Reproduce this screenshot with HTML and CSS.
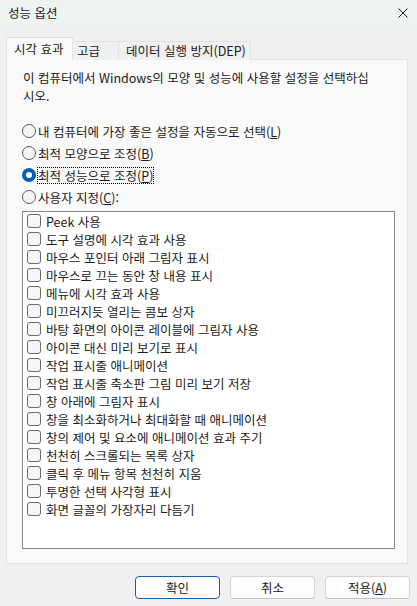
FILE: index.html
```html
<!DOCTYPE html>
<html lang="ko">
<head>
<meta charset="utf-8">
<title>성능 옵션</title>
<link rel="stylesheet" href="styles.css">
</head>
<body>
<div class="titlebar">
  <span class="title">성능 옵션</span>
  <svg class="close" width="10" height="10" viewBox="0 0 10 10"><path d="M0.5 0.5 L9.5 9.5 M9.5 0.5 L0.5 9.5" stroke="#1a1a1a" stroke-width="1" fill="none"/></svg>
</div>
<div class="content">
  <div class="tabs">
    <div class="tab tab-active tab-1">시각 효과</div>
    <div class="tab tab-2">고급</div>
    <div class="tab tab-3">데이터 실행 방지(DEP)</div>
  </div>
  <div class="panel">
    <p class="desc">이 컴퓨터에서 Windows의 모양 및 성능에 사용할 설정을 선택하십<br>시오.</p>
    <div class="radios">
      <div class="radio-row"><span class="radio"></span><span class="rlabel">내 컴퓨터에 가장 좋은 설정을 자동으로 선택(<u>L</u>)</span></div>
      <div class="radio-row"><span class="radio"></span><span class="rlabel">최적 모양으로 조정(<u>B</u>)</span></div>
      <div class="radio-row"><span class="radio radio-on"></span><span class="rlabel focus">최적 성능으로 조정(<u>P</u>)</span></div>
      <div class="radio-row"><span class="radio"></span><span class="rlabel">사용자 지정(<u>C</u>):</span></div>
    </div>
    <div class="listbox">
      <div class="item"><span class="check"></span>Peek 사용</div>
      <div class="item"><span class="check"></span>도구 설명에 시각 효과 사용</div>
      <div class="item"><span class="check"></span>마우스 포인터 아래 그림자 표시</div>
      <div class="item"><span class="check"></span>마우스로 끄는 동안 창 내용 표시</div>
      <div class="item"><span class="check"></span>메뉴에 시각 효과 사용</div>
      <div class="item"><span class="check"></span>미끄러지듯 열리는 콤보 상자</div>
      <div class="item"><span class="check"></span>바탕 화면의 아이콘 레이블에 그림자 사용</div>
      <div class="item"><span class="check"></span>아이콘 대신 미리 보기로 표시</div>
      <div class="item"><span class="check"></span>작업 표시줄 애니메이션</div>
      <div class="item"><span class="check"></span>작업 표시줄 축소판 그림 미리 보기 저장</div>
      <div class="item"><span class="check"></span>창 아래에 그림자 표시</div>
      <div class="item"><span class="check"></span>창을 최소화하거나 최대화할 때 애니메이션</div>
      <div class="item"><span class="check"></span>창의 제어 및 요소에 애니메이션 효과 주기</div>
      <div class="item"><span class="check"></span>천천히 스크롤되는 목록 상자</div>
      <div class="item"><span class="check"></span>클릭 후 메뉴 항목 천천히 지움</div>
      <div class="item"><span class="check"></span>투명한 선택 사각형 표시</div>
      <div class="item"><span class="check"></span>화면 글꼴의 가장자리 다듬기</div>
    </div>
  </div>
</div>
<div class="buttons">
  <button class="btn btn-default">확인</button>
  <button class="btn">취소</button>
  <button class="btn">적용(<u>A</u>)</button>
</div>
</body>
</html>
```
FILE: styles.css
```css
html, body {
  margin: 0;
  padding: 0;
}
body {
  width: 417px;
  height: 606px;
  overflow: hidden;
  background: #f0f0f0;
  font-family: "Noto Sans CJK KR", "Noto Sans", sans-serif;
  font-size: 12.5px;
  color: #1b1b1b;
}
u {
  text-decoration: underline;
  text-underline-offset: 1px;
}
.titlebar {
  height: 28px;
  box-sizing: border-box;
  display: flex;
  align-items: center;
  justify-content: space-between;
  padding: 0 9px 2px 8px;
  background: #eef3f0;
}
.title {
  font-size: 12.5px;
  line-height: 16px;
}
.close {
  display: block;
}
.content {
  padding: 9px 9px 0 6px;
}
.tabs {
  display: flex;
  align-items: flex-end;
  height: 23px;
  margin-bottom: -1px;
  position: relative;
  z-index: 1;
}
.tab {
  box-sizing: border-box;
  height: 19px;
  border: 1px solid #e2e2e2;
  border-bottom: none;
  background: #f0f0f0;
  line-height: 18px;
  white-space: nowrap;
}
.tab-active {
  height: 23px;
  background: #f9f9f9;
  line-height: 21px;
}
.tab-1 { width: 67px; padding-left: 7px; }
.tab-2 { width: 46px; padding-left: 4px; border-left: none; }
.tab-3 { width: 132px; padding-left: 7px; border-left: none; }
.panel {
  box-sizing: border-box;
  width: 402px;
  height: 505px;
  border: 1px solid #e2e2e2;
  background: #f9f9f9;
  padding: 9px 0 0 15px;
}
.desc {
  margin: 0 0 0 1px;
  line-height: 18px;
  white-space: nowrap;
}
.radios {
  margin-top: 15px;
}
.radio-row {
  height: 22px;
  display: flex;
  align-items: center;
}
.radio {
  box-sizing: border-box;
  width: 14px;
  height: 14px;
  border: 1px solid #5c5c5c;
  border-radius: 50%;
  background: #f5f5f5;
  margin-right: 2px;
  flex: none;
  display: flex;
  align-items: center;
  justify-content: center;
}
.radio-on {
  border: none;
  background: #005fb8;
}
.radio-on::after {
  content: "";
  width: 6px;
  height: 6px;
  border-radius: 50%;
  background: #ffffff;
}
.rlabel {
  line-height: 15px;
  white-space: nowrap;
}
.focus {
  outline: 1px dotted #000000;
}
.listbox {
  box-sizing: border-box;
  width: 373px;
  height: 338px;
  margin-top: 3px;
  border: 1px solid #848991;
  background: #ffffff;
}
.item {
  height: 18px;
  display: flex;
  align-items: center;
  padding-left: 4px;
  white-space: nowrap;
}
.check {
  box-sizing: border-box;
  width: 14px;
  height: 14px;
  border: 1px solid #6a6a6a;
  border-radius: 3px;
  background: #f7f7f7;
  margin-right: 5px;
  flex: none;
}
.buttons {
  display: flex;
  justify-content: flex-end;
  gap: 10px;
  padding: 12px 7px 0 0;
}
.btn {
  box-sizing: border-box;
  width: 85px;
  height: 23px;
  padding: 0;
  border: 1px solid #d2d2d2;
  border-bottom-color: #c2c2c2;
  border-radius: 4px;
  background: #fdfdfd;
  font-family: "Noto Sans CJK KR", "Noto Sans", sans-serif;
  font-size: 12.5px;
  color: #1b1b1b;
  line-height: 20px;
}
.btn-default {
  border: 1px solid #1b5fa6;
}
```
